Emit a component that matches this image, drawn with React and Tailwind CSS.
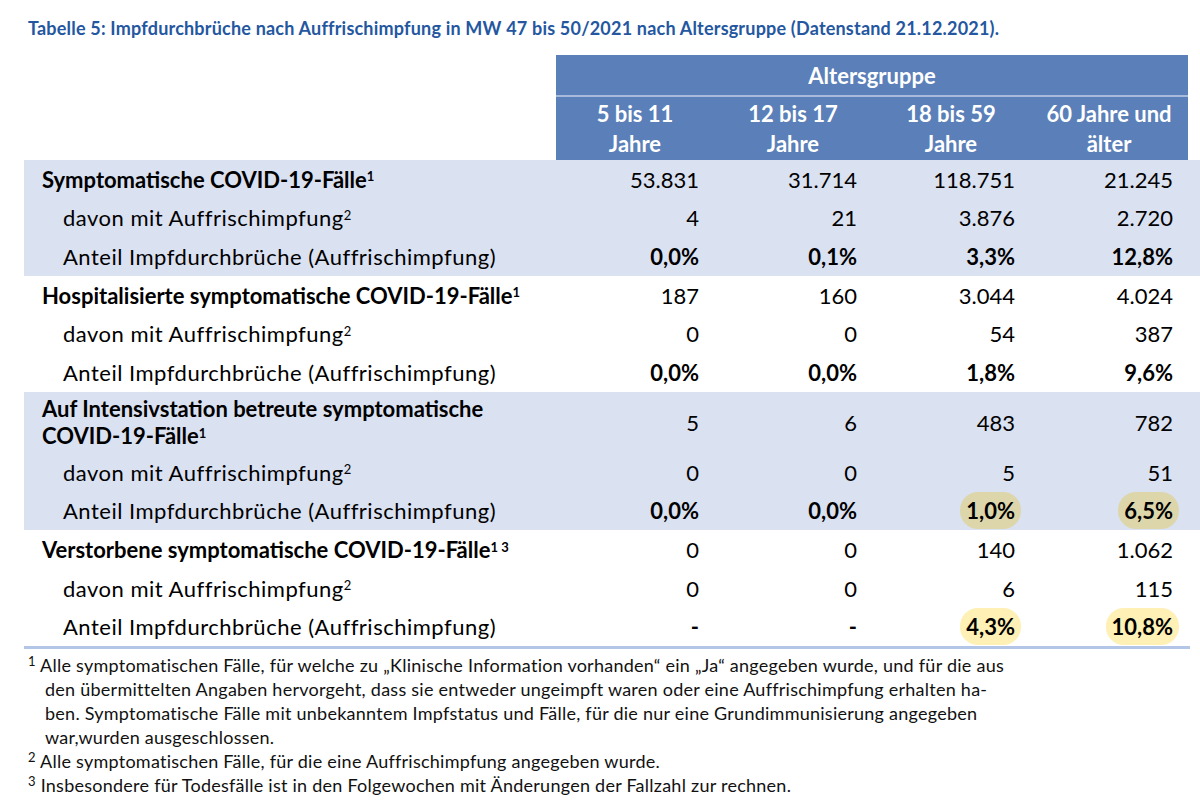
const sup = "text-[13px]";

const groups = [
  {
    shaded: true,
    label: <>Symptomatische COVID-19-Fälle<sup className={sup}>1</sup></>,
    rows: [
      ["53.831", "31.714", "118.751", "21.245"],
      ["4", "21", "3.876", "2.720"],
      ["0,0%", "0,1%", "3,3%", "12,8%"],
    ],
  },
  {
    shaded: false,
    label: <>Hospitalisierte symptomatische COVID-19-Fälle<sup className={sup}>1</sup></>,
    rows: [
      ["187", "160", "3.044", "4.024"],
      ["0", "0", "54", "387"],
      ["0,0%", "0,0%", "1,8%", "9,6%"],
    ],
  },
  {
    shaded: true,
    tall: true,
    label: <>Auf Intensivstation betreute symptomatische<br />COVID-19-Fälle<sup className={sup}>1</sup></>,
    rows: [
      ["5", "6", "483", "782"],
      ["0", "0", "5", "51"],
      ["0,0%", "0,0%", "1,0%", "6,5%"],
    ],
    hl: "bg-[#ddd6ab]",
  },
  {
    shaded: false,
    label: <>Verstorbene symptomatische COVID-19-Fälle<sup className={sup}>1 3</sup></>,
    rows: [
      ["0", "0", "140", "1.062"],
      ["0", "0", "6", "115"],
      ["-", "-", "4,3%", "10,8%"],
    ],
    hl: "bg-[#fff0b5]",
  },
];

function Row({ label, values, bold, shaded, tall, hl, indent }) {
  return (
    <div className={`grid grid-cols-[532px_repeat(4,158px)] ${tall ? "h-[61px]" : "h-[38.67px]"} ${shaded ? "bg-[#dae1f1]" : "bg-white"}`}>
      <div className={`flex items-center ${indent ? "pl-[39px] tracking-[0.5px]" : "pl-[18px] font-bold"} ${tall ? "leading-[27px]" : ""}`}>
        <span>{label}</span>
      </div>
      {values.map((v, i) => (
        <div key={i} className="flex items-center justify-end pr-[9px]">
          <span
            className={`px-[6px] ${bold ? "font-bold" : ""} ${hl && i >= 2 ? `${hl} rounded-[18px] h-[37px] flex items-center` : ""}`}
          >
            {v}
          </span>
        </div>
      ))}
    </div>
  );
}

export default function App() {
  return (
    <div className="w-[1200px] h-[800px] bg-white text-black font-['Lato','Liberation_Sans',sans-serif]">
      <div className="pl-[28px] pt-[16px] text-[18px] tracking-[0.2px] font-bold text-[#2457a0] leading-[24px]">
        Tabelle 5: Impfdurchbrüche nach Auffrischimpfung in MW 47 bis 50/2021 nach Altersgruppe (Datenstand 21.12.2021).
      </div>
      <div className="ml-[24px] mt-[15px] text-[22px]">
        <div className="grid grid-cols-[532px_632px]">
          <div />
          <div className="bg-[#5b7fb8] text-white font-bold h-[40px] flex items-center justify-center">Altersgruppe</div>
        </div>
        <div className="grid grid-cols-[532px_632px]">
          <div />
          <div className="h-[2px] bg-[#a7badb]" />
        </div>
        <div className="grid grid-cols-[532px_repeat(4,158px)]">
          <div />
          {[["5 bis 11", "Jahre"], ["12 bis 17", "Jahre"], ["18 bis 59", "Jahre"], ["60 Jahre und", "älter"]].map((t) => (
            <div key={t[0]} className="bg-[#5b7fb8] text-white font-bold h-[63px] flex flex-col items-center justify-center text-center leading-[30px]">
              <span>{t[0]}</span>
              <span>{t[1]}</span>
            </div>
          ))}
        </div>
        {groups.map((g, gi) => (
          <div key={gi}>
            {g.rows.map((r, ri) => (
              <Row
                key={ri}
                label={
                  ri === 0 ? g.label : ri === 1 ? (
                    <>davon mit Auffrischimpfung<sup className={sup}>2</sup></>
                  ) : (
                    "Anteil Impfdurchbrüche (Auffrischimpfung)"
                  )
                }
                indent={ri > 0}
                values={r}
                bold={ri === 2}
                shaded={g.shaded}
                tall={ri === 0 && g.tall}
                hl={ri === 2 ? g.hl : null}
              />
            ))}
          </div>
        ))}
        <div className="h-[3px] bg-[#b4c6e7] w-[1166px]" />
      </div>
      <div className="ml-[28px] mt-[4px] text-[18px] leading-[24px] tracking-[0.25px] text-[#111] whitespace-nowrap">
        <p className="pl-[17px] -indent-[17px]">
          <sup className={sup}>1</sup> Alle symptomatischen Fälle, für welche zu „Klinische Information vorhanden“ ein „Ja“ angegeben wurde, und für die aus<br />
          den übermittelten Angaben hervorgeht, dass sie entweder ungeimpft waren oder eine Auffrischimpfung erhalten ha-<br />
          ben. Symptomatische Fälle mit unbekanntem Impfstatus und Fälle, für die nur eine Grundimmunisierung angegeben<br />
          war,wurden ausgeschlossen.
        </p>
        <p><sup className={sup}>2</sup> Alle symptomatischen Fälle, für die eine Auffrischimpfung angegeben wurde.</p>
        <p><sup className={sup}>3</sup> Insbesondere für Todesfälle ist in den Folgewochen mit Änderungen der Fallzahl zur rechnen.</p>
      </div>
    </div>
  );
}
